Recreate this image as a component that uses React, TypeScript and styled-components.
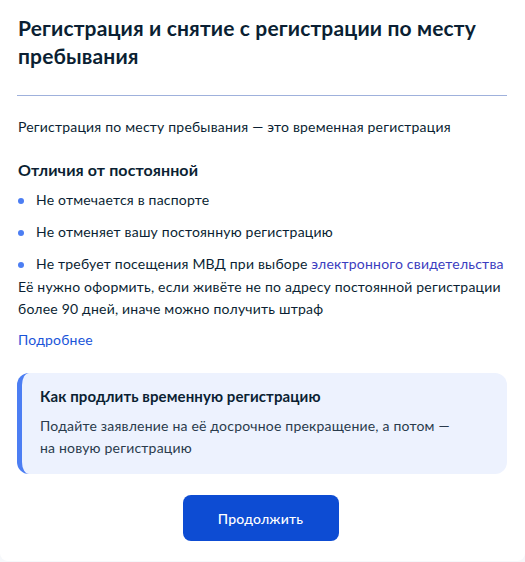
import React from "react";
import styled, { createGlobalStyle } from "styled-components";

const Global = createGlobalStyle`
  html, body { margin: 0; padding: 0; background: #f6f8fb; }
  body { font-family: Lato, "Noto Sans", sans-serif; color: #0b1f33; -webkit-font-smoothing: antialiased; }
  * { box-sizing: border-box; }
`;

const Card = styled.div`
  width: 525px;
  min-height: 561px;
  background: #ffffff;
  border-radius: 0 0 8px 8px;
  padding: 14px 20px 20px 18px;
  display: flex;
  flex-direction: column;
`;

const Title = styled.h1`
  margin: 0;
  font-size: 21px;
  line-height: 28px;
  font-weight: 700;
  color: #0b1f33;
  letter-spacing: 0.15px;
`;

const Divider = styled.hr`
  margin: 25px -2px 0 -1px;
  border: none;
  height: 1px;
  background: #9fb1dc;
`;

const Lead = styled.p`
  margin: 20px 0 0;
  font-size: 14px;
  line-height: 22px;
  letter-spacing: 0.2px;
`;

const SubTitle = styled.h2`
  margin: 20px 0 0;
  font-size: 16px;
  line-height: 24px;
  font-weight: 700;
  letter-spacing: 0.1px;
`;

const List = styled.ul`
  list-style: none;
  margin: 7px 0 0;
  padding: 0;
  display: flex;
  flex-direction: column;
  gap: 10px;
`;

const Item = styled.li`
  position: relative;
  padding-left: 18px;
  font-size: 14px;
  line-height: 22px;
  letter-spacing: 0.2px;
  &::before {
    content: "";
    position: absolute;
    left: 0;
    top: 9px;
    width: 6px;
    height: 6px;
    border-radius: 50%;
    background: #4c7ef3;
  }
`;

const Para = styled.p`
  margin: 1px 0 0;
  font-size: 14px;
  line-height: 22px;
  letter-spacing: 0.2px;
`;

const Link = styled.a<{ $tone?: "visited" | "normal" }>`
  color: ${(p) => (p.$tone === "visited" ? "#3b3dc0" : "#1a55d9")};
  text-decoration: none;
`;

const More = styled.div`
  margin-top: 9px;
  font-size: 14px;
  line-height: 22px;
  letter-spacing: 0.2px;
`;

const Callout = styled.div`
  margin-top: 22px;
  margin-right: -2px;
  margin-left: -1px;
  background: #edf2fe;
  border-radius: 12px;
  border-left: 5px solid #4c7ef3;
  padding: 12px 20px 15px 18px;
`;

const CalloutTitle = styled.h3`
  margin: 0;
  font-size: 15px;
  line-height: 22px;
  font-weight: 700;
  letter-spacing: 0.1px;
`;

const CalloutText = styled.p`
  margin: 8px 0 0;
  font-size: 14px;
  line-height: 22px;
  letter-spacing: 0.2px;
  color: #2a3b4c;
`;

const Actions = styled.div`
  display: flex;
  justify-content: center;
  margin-top: 21px;
  padding-right: 2px;
`;

const Button = styled.button`
  width: 156px;
  height: 46px;
  border: none;
  border-radius: 8px;
  background: #0d4cd3;
  color: #ffffff;
  font-family: Lato, "Noto Sans", sans-serif;
  font-size: 14px;
  font-weight: 500;
  letter-spacing: 0.2px;
  cursor: pointer;
`;

export default function App() {
  return (
    <>
      <Global />
      <Card>
        <Title>Регистрация и снятие с регистрации по месту пребывания</Title>
        <Divider />
        <Lead>Регистрация по месту пребывания — это временная регистрация</Lead>
        <SubTitle>Отличия от постоянной</SubTitle>
        <List>
          <Item>Не отмечается в паспорте</Item>
          <Item>Не отменяет вашу постоянную регистрацию</Item>
          <Item>
            Не требует посещения МВД при выборе{" "}
            <Link $tone="visited" href="#">электронного свидетельства</Link>
          </Item>
        </List>
        <Para>
          Её нужно оформить, если живёте не по адресу постоянной регистрации более 90 дней, иначе можно получить штраф
        </Para>
        <More>
          <Link href="#">Подробнее</Link>
        </More>
        <Callout>
          <CalloutTitle>Как продлить временную регистрацию</CalloutTitle>
          <CalloutText>
            Подайте заявление на её досрочное прекращение, а потом —<br />на новую регистрацию
          </CalloutText>
        </Callout>
        <Actions>
          <Button>Продолжить</Button>
        </Actions>
      </Card>
    </>
  );
}
